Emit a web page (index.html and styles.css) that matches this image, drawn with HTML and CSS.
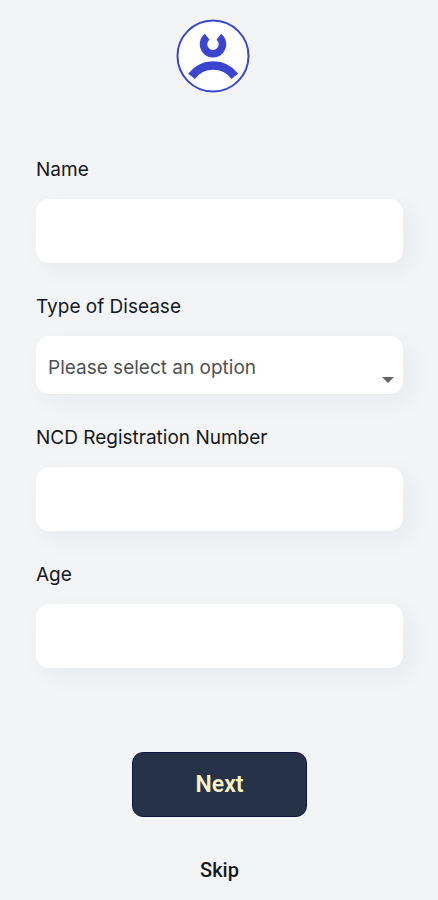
FILE: index.html
```html
<!DOCTYPE html>
<html lang="en">
<head>
    <meta charset="UTF-8">
    <meta name="viewport" content="width=device-width, initial-scale=1.0">
    <title>Registration</title>
    <link rel="stylesheet" href="styles.css">
</head>
<body>

<main class="page">
    <svg class="logo" viewBox="0 0 74 74" fill="none" stroke="#3b46cf">
        <circle cx="37" cy="37" r="35.5" fill="#fff" stroke-width="2"/>
        <path d="M31.2 17.7A9.5 9.5 0 1 0 42.8 17.7" stroke-width="7.5"/>
        <path d="M15.6 57.4A27 27 0 0 1 58.8 57.4" stroke-width="8.5"/>
    </svg>

    <form class="form">
        <div class="field">
            <label for="name">Name</label>
            <input type="text" id="name">
        </div>

        <div class="field">
            <label for="disease">Type of Disease</label>
            <div class="select-box">
                <select id="disease">
                    <option value="">Please select an option</option>
                </select>
                <svg class="arrow" viewBox="0 0 12 6"><path d="M0 0H12L6 6Z" fill="#666"/></svg>
            </div>
        </div>

        <div class="field">
            <label for="ncd">NCD Registration Number</label>
            <input type="text" id="ncd">
        </div>

        <div class="field">
            <label for="age">Age</label>
            <input type="text" id="age">
        </div>
    </form>

    <button type="button" class="next">Next</button>
    <a href="#" class="skip">Skip</a>
</main>

</body>
</html>
```
FILE: styles.css
```css
body {
    margin: 0;
    background-color: #f2f4f6;
    color: #16181c;
    font-family: Inter, "Liberation Sans", sans-serif;
    font-size: 19px;
    line-height: 24px;
}

.page {
    display: flex;
    flex-direction: column;
    align-items: center;
    padding: 19px 35px 18px 36px;
}

.logo {
    width: 74px;
    height: 74px;
    margin-right: 14px;
}

.form {
    display: flex;
    flex-direction: column;
    gap: 32px;
    width: 100%;
    margin-top: 65px;
}

.field {
    display: flex;
    flex-direction: column;
    gap: 17px;
}

input, select {
    display: block;
    width: 100%;
    height: 64px;
    padding: 0 12px;
    box-sizing: border-box;
    border: none;
    border-radius: 13px;
    background-color: #fff;
    box-shadow: 8px 8px 24px rgba(40, 60, 80, 0.05);
    color: #505050;
    font: inherit;
}

select {
    height: 58px;
    padding-top: 5px;
    appearance: none;
}

.select-box {
    position: relative;
}

.arrow {
    position: absolute;
    right: 9px;
    bottom: 11px;
    width: 12px;
    height: 6px;
    pointer-events: none;
}

.next {
    width: 175px;
    height: 65px;
    margin-top: 84px;
    border: 1px solid #12163a;
    border-radius: 11px;
    background-color: #263248;
    color: #f6f2c4;
    font-family: Roboto, "Liberation Sans", sans-serif;
    font-size: 23px;
    font-weight: 600;
    cursor: pointer;
}

.skip {
    margin-top: 41px;
    color: #16181c;
    font-family: Roboto, "Liberation Sans", sans-serif;
    font-size: 20px;
    font-weight: 500;
    text-decoration: none;
}
```
